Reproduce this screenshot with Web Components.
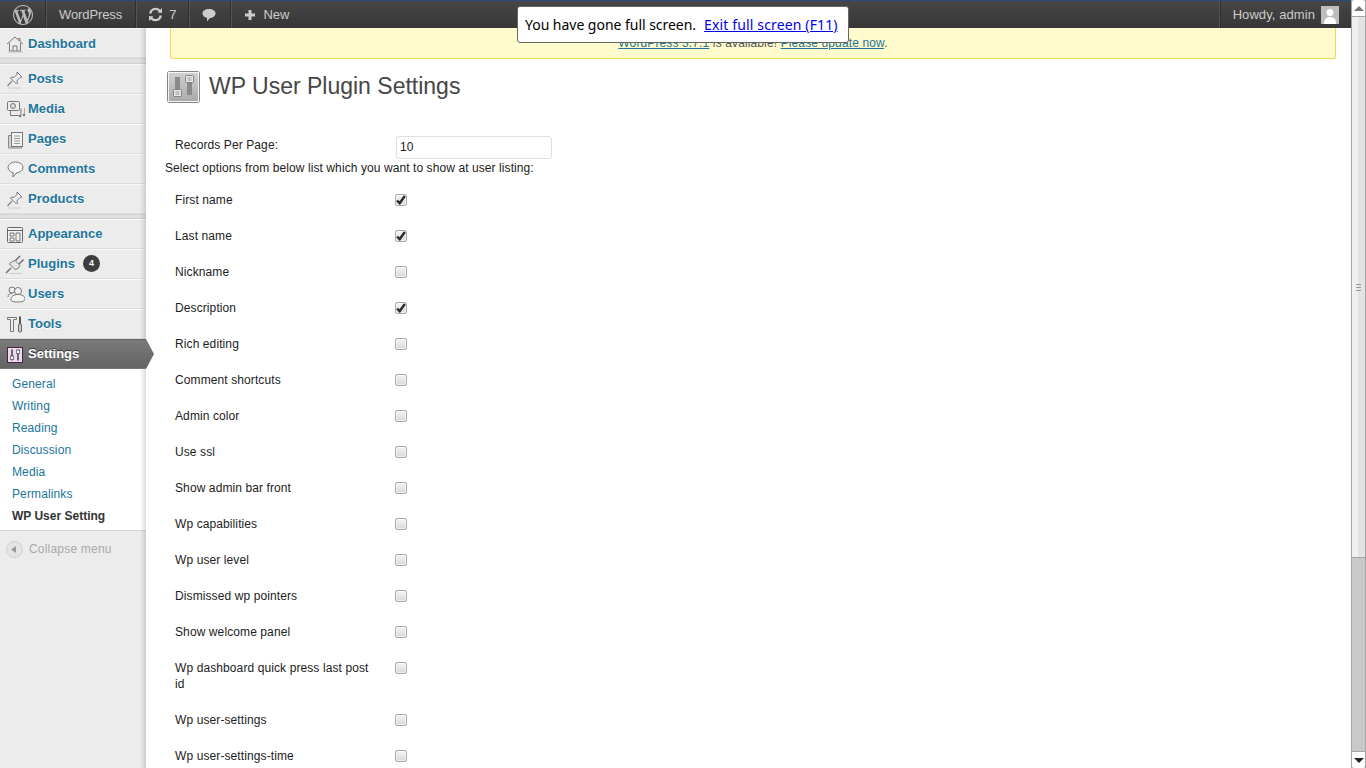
<!DOCTYPE html>
<html lang="en">
<head>
<meta charset="utf-8">
<title>WP User Plugin Settings</title>
<style>
  html, body { margin: 0; height: 768px; overflow: hidden; background: #fff; }
  body { font-family: "Liberation Sans", Arial, sans-serif; font-size: 12px; color: #333; }
</style>
</head>
<body>
<wp-app>
  <wp-adminbar slot="bar"></wp-adminbar>
  <wp-sidebar slot="side">
    <wp-menu-item icon="dashboard" label="Dashboard" first></wp-menu-item>
    <wp-menu-sep style="height:4px"></wp-menu-sep>
    <wp-menu-item icon="pin" label="Posts"></wp-menu-item>
    <wp-menu-item icon="media" label="Media"></wp-menu-item>
    <wp-menu-item icon="pages" label="Pages"></wp-menu-item>
    <wp-menu-item icon="comments" label="Comments"></wp-menu-item>
    <wp-menu-item icon="pin" label="Products"></wp-menu-item>
    <wp-menu-sep></wp-menu-sep>
    <wp-menu-item icon="appearance" label="Appearance"></wp-menu-item>
    <wp-menu-item icon="plugins" label="Plugins" badge="4"></wp-menu-item>
    <wp-menu-item icon="users" label="Users"></wp-menu-item>
    <wp-menu-item icon="tools" label="Tools"></wp-menu-item>
    <wp-menu-item icon="settings" label="Settings" current></wp-menu-item>
    <wp-submenu>
      <a>General</a><a>Writing</a><a>Reading</a><a>Discussion</a><a>Media</a><a>Permalinks</a><a class="on">WP User Setting</a>
    </wp-submenu>
    <wp-collapse></wp-collapse>
  </wp-sidebar>
  <wp-notice slot="main"></wp-notice>
  <wp-heading slot="main">WP User Plugin Settings</wp-heading>
  <wp-settings slot="main"></wp-settings>
  <fake-scrollbar slot="scroll"></fake-scrollbar>
  <fs-toast slot="toast"></fs-toast>
</wp-app>

<script>
// icons for the admin menu, all in a 20x20 box
const ICONS = {
  dashboard: `<path d="M2 10 10 3l8 7M4.500 9v8h11V9M8 17v-5h4v5M13 4.500h2v2.500" fill="none" stroke="#777" stroke-width="1"/><path d="M3 18h15" stroke="#bbb"/>`,
  pin: `<path d="M12 3l5 5-2 .5-3 3 .5 2.500-1 1-6-6 1-1 2.500.500 3-3z" fill="#eee" stroke="#777"/><path d="M7 12l-4.500 5" stroke="#888" stroke-width="1.300"/><path d="M3 19h13" stroke="#ccc"/>`,
  media: `<rect x="2.500" y="2.500" width="12" height="9" rx="1" fill="#eee" stroke="#777"/><circle cx="8" cy="7" r="2.500" fill="#ddd" stroke="#777"/><path d="M5.500 11.500v5h8M16 9.500v7M20 9v6" fill="none" stroke="#777"/><circle cx="15" cy="17" r="1.300" fill="#777"/><circle cx="19" cy="16" r="1.300" fill="#777"/>`,
  pages: `<path d="M3.500 6.500h3v11h10v1.500h-13z" fill="#d5d5d5" stroke="#888"/><rect x="6.500" y="3.500" width="11" height="14" fill="#f3f3f3" stroke="#777"/><path d="M9 7h6M9 9.500h6M9 12h6M9 14.500h6" stroke="#999"/>`,
  comments: `<ellipse cx="10.500" cy="8.500" rx="7.500" ry="5.500" fill="#f6f6f6" stroke="#777"/><path d="M8 13.500v4.500l3.500-4" fill="#f6f6f6" stroke="#777"/><path d="M8.600 13.300l2.600.300" stroke="#f6f6f6" stroke-width="1.500"/>`,
  appearance: `<rect x="2.500" y="3.500" width="15" height="15" rx="1" fill="#f2f2f2" stroke="#666"/><path d="M3 6.500h14" stroke="#666"/><path d="M5 9h4v3H5zM5 14h4v3H5zM11 9h4v8h-4z" fill="none" stroke="#777"/>`,
  plugins: `<path d="M1 19l5-5" stroke="#777" stroke-width="1.600"/><path d="M4.500 10l5.500 5.500 3-1 2-3-5-5-3.500 1.500z" fill="#e6e6e6" stroke="#777"/><path d="M10.500 6.500l4.500-4.500M14 10l4.500-4.500" stroke="#777" stroke-width="1.700"/><path d="M4 19.500h13" stroke="#ccc"/>`,
  users: `<circle cx="7" cy="6" r="3" fill="#eee" stroke="#777"/><circle cx="13" cy="7" r="3.500" fill="#f4f4f4" stroke="#777"/><path d="M3 13c0-3 2-3.500 4-3.500M6 16c0-4 3-5.500 7-5.500s7 1.500 7 4.500c0 2-3 3-7 3s-7-.500-7-2z" fill="#f4f4f4" stroke="#777"/>`,
  tools: `<path d="M2.500 3.500h9v2h-3v12h-3v-12h-3z" fill="#eee" stroke="#777"/><rect x="13.500" y="10" width="3" height="8" rx="1" fill="#ccc" stroke="#666"/><path d="M15 2.500V10" stroke="#555" stroke-width="2"/>`,
  settings: `<rect x="2.500" y="3.500" width="15" height="15" fill="#e8dfe8" stroke="#4a1f4a"/><path d="M7 5.500v11M13 5.500v11" stroke="#54425a" stroke-width="1.600"/><rect x="5.300" y="12" width="3.400" height="3.500" fill="#fff" stroke="#54425a" stroke-width=".7"/><rect x="11.300" y="6" width="3.400" height="3.500" fill="#fff" stroke="#54425a" stroke-width=".7"/>`
};
const WP_LOGO = "M20 10c0-5.510-4.490-10-10-10C4.480 0 0 4.490 0 10c0 5.520 4.480 10 10 10 5.510 0 10-4.480 10-10zM7.780 15.370L4.370 6.220c.55-.02 1.170-.08 1.170-.08.5-.06.44-1.130-.06-1.110 0 0-1.450.11-2.370.11-.18 0-.37 0-.58-.01C4.120 2.690 6.870 1.070 10 1.070c2.330 0 4.450.87 6.050 2.340-.68-.11-1.650.39-1.650 1.580 0 .74.45 1.360.9 2.100.35.61.55 1.360.55 2.460 0 1.490-1.400 5-1.400 5l-3.030-8.370c.54-.02.82-.17.82-.17.5-.05.44-1.250-.06-1.220 0 0-1.440.12-2.380.12-.87 0-2.330-.12-2.330-.12-.5-.03-.56 1.200-.06 1.220l.92.08 1.260 3.410zM17.410 10c.24-.64.74-1.870.43-4.250.7 1.290 1.050 2.710 1.050 4.250 0 3.290-1.730 6.240-4.400 7.780.97-2.590 1.940-5.210 2.920-7.780zM6.100 18.090C3.120 16.650 1.070 13.530 1.070 10c0-1.300.23-2.480.72-3.590C3.180 10.220 4.640 14.150 6.100 18.090zm4.030-6.630l2.580 6.980c-.86.29-1.760.45-2.710.45-.79 0-1.570-.11-2.290-.33.810-2.380 1.620-4.740 2.420-7.100z";

// tiny helper so each class stays short
class Base extends HTMLElement {
  render(html) {
    if (!this.shadowRoot) this.attachShadow({ mode: "open" });
    this.shadowRoot.innerHTML = html;
  }
}

class WpApp extends Base {
  connectedCallback() {
    this.render(`<style>
      :host { display: flex; width: 1366px; height: 768px; position: relative; overflow: hidden; }
      .left { flex: 1; min-width: 0; display: flex; flex-direction: column; }
      .body { flex: 1; display: flex; min-height: 0; }
      .main { flex: 1; min-width: 0; padding-left: 19px; }
    </style>
    <div class="left">
      <slot name="bar"></slot>
      <div class="body">
        <slot name="side"></slot>
        <div class="main"><slot name="main"></slot></div>
      </div>
    </div>
    <slot name="scroll"></slot>
    <slot name="toast"></slot>`);
  }
}

class WpAdminbar extends Base {
  connectedCallback() {
    this.render(`<style>
      :host { display: flex; height: 27px; border-top: 1px solid #2b4a85; flex: none;
        background: linear-gradient(#464646, #373737); color: #ccc; font-size: 13px; line-height: 27px; }
      .i { display: flex; align-items: center; border-right: 1px solid #2d2d2d; box-shadow: 1px 0 0 #555; }
      .logo { width: 46px; box-sizing: border-box; padding-left: 13px; }
      .site { padding: 0 13px 0 13px; letter-spacing: -.1px; }
      .upd { padding: 0 12px 0 12px; gap: 6px; }
      .com { padding: 0 14px 0 13px; }
      .new { padding-left: 13px; gap: 7px; border-right: 0; box-shadow: none; }
      .right { margin-left: auto; border-right: 0; box-shadow: -1px 0 0 #555; border-left: 1px solid #2d2d2d; padding: 0 12px; gap: 6px; letter-spacing: .08px; }
      svg { display: block; }
    </style>
    <div class="i logo"><svg width="20" height="20" viewBox="0 0 20 20"><path fill="#bbb" d="${WP_LOGO}"/></svg></div>
    <div class="i site">WordPress</div>
    <div class="i upd"><svg width="15" height="15" viewBox="0 0 15 15"><path d="M2.200 6.500A5.500 5.500 0 0 1 12 4M12.800 8.500A5.500 5.500 0 0 1 3 11" fill="none" stroke="#ccc" stroke-width="2.200"/><path d="M9.500 5.500 14 1v5zM5.500 9.500 1 14V9z" fill="#ccc"/></svg>7</div>
    <div class="i com"><svg width="14" height="14" viewBox="0 0 14 14"><path d="M7 1c3.500 0 6.500 1.800 6.500 4.400S10.500 10 8 10l-3 3.500V9.700C2.500 9.400.5 7.700.5 5.400.5 2.800 3.500 1 7 1z" fill="#ccc"/></svg></div>
    <div class="i new"><svg width="12" height="12" viewBox="0 0 12 12"><path d="M4.500 1h3v3.500H11v3H7.500V11h-3V7.500H1v-3h3.500z" fill="#ccc"/></svg>New</div>
    <div class="i right">Howdy, admin <svg width="18" height="18" viewBox="0 0 18 18"><rect width="18" height="18" fill="#bdbdbd"/><circle cx="9" cy="6.500" r="3.500" fill="#fff"/><path d="M3 18c0-5 2-7 6-7s6 2 6 7z" fill="#fff"/></svg></div>`);
  }
}

class WpSidebar extends Base {
  connectedCallback() {
    this.render(`<style>
      :host { display: flex; flex-direction: column; width: 146px; flex: none; background: #ececec; position: relative; }
      :host::after { content: ""; position: absolute; top: 0; bottom: 0; right: 0; width: 6px; pointer-events: none;
        background: linear-gradient(to right, rgba(0,0,0,0), rgba(0,0,0,.13)); }
    </style><slot></slot>`);
  }
}

class WpMenuItem extends Base {
  connectedCallback() {
    const badge = this.getAttribute("badge");
    this.render(`<style>
      :host { display: flex; align-items: center; height: 26px; padding: 0 0 2px 5px; position: relative;
        border-top: 1px solid #f8f8f8; border-bottom: 1px solid #dcdcdc;
        font-weight: bold; font-size: 13px; color: #21759b; text-shadow: 0 1px 0 #fff; }
      :host([first]) { padding-top: 1px; padding-bottom: 1px; }
      :host([current]) { background: linear-gradient(#7a7a7a, #646464); color: #fff; text-shadow: 0 -1px 0 #333;
        border-color: transparent; background-clip: border-box; z-index: 2; }
      :host([current])::after { content: ""; position: absolute; left: 146px; top: -1px; width: 8px; height: 30px;
        background: linear-gradient(#7a7a7a, #646464); clip-path: polygon(0 0, 100% 50%, 0 100%); }
      svg { display: block; width: 20px; height: 20px; margin-right: 3px; flex: none; transform: translateY(1px); }
      .b { margin-left: 8px; width: 17px; height: 17px; border-radius: 50%; background: #3e3e3e; color: #fff;
        font-size: 9px; line-height: 17px; text-align: center; text-shadow: none; }
    </style>
    <svg viewBox="0 0 20 20">${ICONS[this.getAttribute("icon")]}</svg>
    <span>${this.getAttribute("label")}</span>${badge ? `<span class="b">${badge}</span>` : ""}`);
  }
}

class WpMenuSep extends Base {
  connectedCallback() {
    this.render(`<style>
      :host { display: block; height: 3px; background: #e0e0e0; border-top: 1px solid #d6d6d6; border-bottom: 1px solid #d0d0d0; }
    </style>`);
  }
}

class WpSubmenu extends Base {
  connectedCallback() {
    this.render(`<style>
      :host { display: block; background: #fff; padding: 4px 0 3px; border-bottom: 1px solid #d5d5d5; font-size: 12px; letter-spacing: .12px; }
      ::slotted(a) { display: block; height: 22px; line-height: 22px; padding-left: 12px; color: #21759b; }
      ::slotted(a.on) { color: #333; font-weight: bold; letter-spacing: 0; }
    </style><slot></slot>`);
  }
}

class WpCollapse extends Base {
  connectedCallback() {
    this.render(`<style>
      :host { display: flex; align-items: center; gap: 6px; height: 36px; padding-left: 6px; color: #aaa; font-size: 12px; letter-spacing: .2px; }
      svg { display: block; }
    </style>
    <svg width="17" height="17" viewBox="0 0 17 17"><circle cx="8.500" cy="8.500" r="8" fill="#e4e4e4" stroke="#cfcfcf"/><path d="M5 8.500 10 5v7z" fill="#999"/></svg>
    <span>Collapse menu</span>`);
  }
}

class WpNotice extends Base {
  connectedCallback() {
    this.render(`<style>
      :host { display: block; margin: 0 15px 0 5px; height: 30px; line-height: 31px; text-align: center; font-size: 12px;
        letter-spacing: .125px; background: #fffbcc; border: 1px solid #e6db55; border-top: 0; border-radius: 0 0 3px 3px; color: #555; }
      a { color: #21759b; text-decoration: underline; }
    </style><a>WordPress 3.7.1</a> is available! <a>Please update now</a>.`);
  }
}

class WpHeading extends Base {
  connectedCallback() {
    this.render(`<style>
      :host { display: flex; align-items: center; gap: 9px; margin: 12px 0 0 2px; height: 32px; font-size: 23px; color: #464646; }
      svg { display: block; flex: none; }
      slot { display: block; margin-top: -2px; }
    </style>
    <svg width="33" height="32" viewBox="0 0 33 32">
      <defs><linearGradient id="g" x1="0" y1="0" x2="0" y2="1"><stop offset="0" stop-color="#d2d2d2"/><stop offset="1" stop-color="#a8a8a8"/></linearGradient></defs>
      <rect x=".5" y=".5" width="32" height="31" rx="2" fill="url(#g)" stroke="#858585"/>
      <rect x="1.500" y="1.500" width="30" height="29" fill="none" stroke="#f4f4f4"/>
      <rect x="8" y="6" width="5" height="19" fill="#8a8a8a"/><rect x="20" y="4" width="5" height="20" fill="#8a8a8a"/>
      <rect x="6.500" y="18.500" width="8" height="7" rx="1" fill="#e6e6e6" stroke="#828282"/><path d="M8.500 21h4M8.500 23h4" stroke="#999"/>
      <rect x="18.500" y="4.500" width="8" height="7" rx="1" fill="#e6e6e6" stroke="#828282"/><path d="M20.500 7h4M20.500 9h4" stroke="#999"/>
    </svg><slot></slot>`);
  }
}

class WpSettingRow extends Base {
  connectedCallback() {
    this.render(`<style>
      :host { display: grid; grid-template-columns: 200px 1fr; gap: 20px; padding: 10px; font-size: 12px; line-height: 16px;
        color: #222; letter-spacing: .1px; }
      .c { padding-top: 2px; display: flex; }
      .box { width: 12px; height: 12px; box-sizing: border-box; border: 1px solid #aaa; border-radius: 2px;
        background: linear-gradient(#f4f4f4, #d8d8d8); box-shadow: inset 0 0 0 1px rgba(255,255,255,.5); position: relative; }
      svg { position: absolute; left: 0; top: 0; }
    </style>
    <div><slot></slot></div>
    <div class="c"><div class="box">${this.hasAttribute("checked")
      ? `<svg width="10" height="10" viewBox="0 0 10 10"><path d="M1 5.500 3.700 8.200 8.800 1" fill="none" stroke="#2a2a2a" stroke-width="2.400"/></svg>` : ""}</div></div>`);
  }
}

class WpSettings extends Base {
  connectedCallback() {
    const rows = [["First name", 1], ["Last name", 1], ["Nickname"], ["Description", 1], ["Rich editing"], ["Comment shortcuts"],
      ["Admin color"], ["Use ssl"], ["Show admin bar front"], ["Wp capabilities"], ["Wp user level"], ["Dismissed wp pointers"],
      ["Show welcome panel"], ["Wp dashboard quick press last post id"], ["Wp user-settings"], ["Wp user-settings-time"]];
    this.render(`<style>
      :host { display: block; font-size: 12px; color: #222; margin-top: 33px; }
      .rec { display: grid; grid-template-columns: 200px 1fr; gap: 21px; padding: 0 10px; line-height: 16px; letter-spacing: .1px; }
      .lab { padding-top: 1px; }
      .inp { width: 156px; height: 23px; box-sizing: border-box; border: 1px solid #dfdfdf; border-radius: 3px; padding: 0 3px;
        line-height: 21px; }
      .sel { line-height: 16px; margin: 1px 0 6px; letter-spacing: .085px; }
    </style>
    <div class="rec"><div class="lab">Records Per Page:</div><div class="inp">10</div></div>
    <div class="sel">Select options from below list which you want to show at user listing:</div>
    ${rows.map(r => `<wp-setting-row ${r[1] ? "checked" : ""}>${r[0]}</wp-setting-row>`).join("")}`);
  }
}

class FakeScrollbar extends Base {
  connectedCallback() {
    this.render(`<style>
      :host { display: flex; flex-direction: column; width: 15px; flex: none; background: #c9c9c9; box-sizing: border-box;
        border-left: 1px solid #a5a5a5; border-right: 1px solid #a5a5a5; }
      .btn { height: 16px; background: #fff; display: flex; align-items: center; justify-content: center; flex: none; }
      .up { border-bottom: 1px solid #a5a5a5; border-radius: 3px 3px 0 0; } .down { border-top: 1px solid #a5a5a5; margin-top: auto; border-radius: 0 0 3px 3px; }
      .thumb { height: 541px; box-sizing: border-box; border-bottom: 1px solid #a5a5a5; display: flex; flex-direction: column;
        justify-content: center; align-items: center; gap: 2px; flex: none;
        background: linear-gradient(to right, #f0f0f0 50%, #e3e3e3 50%); }
      .thumb i { display: block; width: 5px; height: 1px; background: #999; }
      .ar { width: 0; height: 0; border-left: 5px solid transparent; border-right: 5px solid transparent; }
    </style>
    <div class="btn up"><div class="ar" style="border-bottom:5px solid #777"></div></div>
    <div class="thumb"><i></i><i></i><i></i></div>
    <div class="btn down"><div class="ar" style="border-top:5px solid #222"></div></div>`);
  }
}

class FsToast extends Base {
  connectedCallback() {
    this.render(`<style>
      :host { position: absolute; left: 517px; top: 6px; width: 332px; height: 37px; box-sizing: border-box; z-index: 10;
        background: #fff; border: 1px solid #666; border-radius: 3px; display: flex; align-items: center; gap: 8px;
        padding-left: 7px; font-family: "Noto Sans", "Open Sans", sans-serif; font-size: 14px; color: #000; white-space: nowrap; }
      a { color: #00e; text-decoration: underline; letter-spacing: .14px; }
      span { letter-spacing: -.03px; }
    </style><span>You have gone full screen.</span><a>Exit full screen (F11)</a>`);
  }
}

customElements.define("wp-app", WpApp);
customElements.define("wp-adminbar", WpAdminbar);
customElements.define("wp-sidebar", WpSidebar);
customElements.define("wp-menu-item", WpMenuItem);
customElements.define("wp-menu-sep", WpMenuSep);
customElements.define("wp-submenu", WpSubmenu);
customElements.define("wp-collapse", WpCollapse);
customElements.define("wp-notice", WpNotice);
customElements.define("wp-heading", WpHeading);
customElements.define("wp-setting-row", WpSettingRow);
customElements.define("wp-settings", WpSettings);
customElements.define("fake-scrollbar", FakeScrollbar);
customElements.define("fs-toast", FsToast);
</script>
</body>
</html>
